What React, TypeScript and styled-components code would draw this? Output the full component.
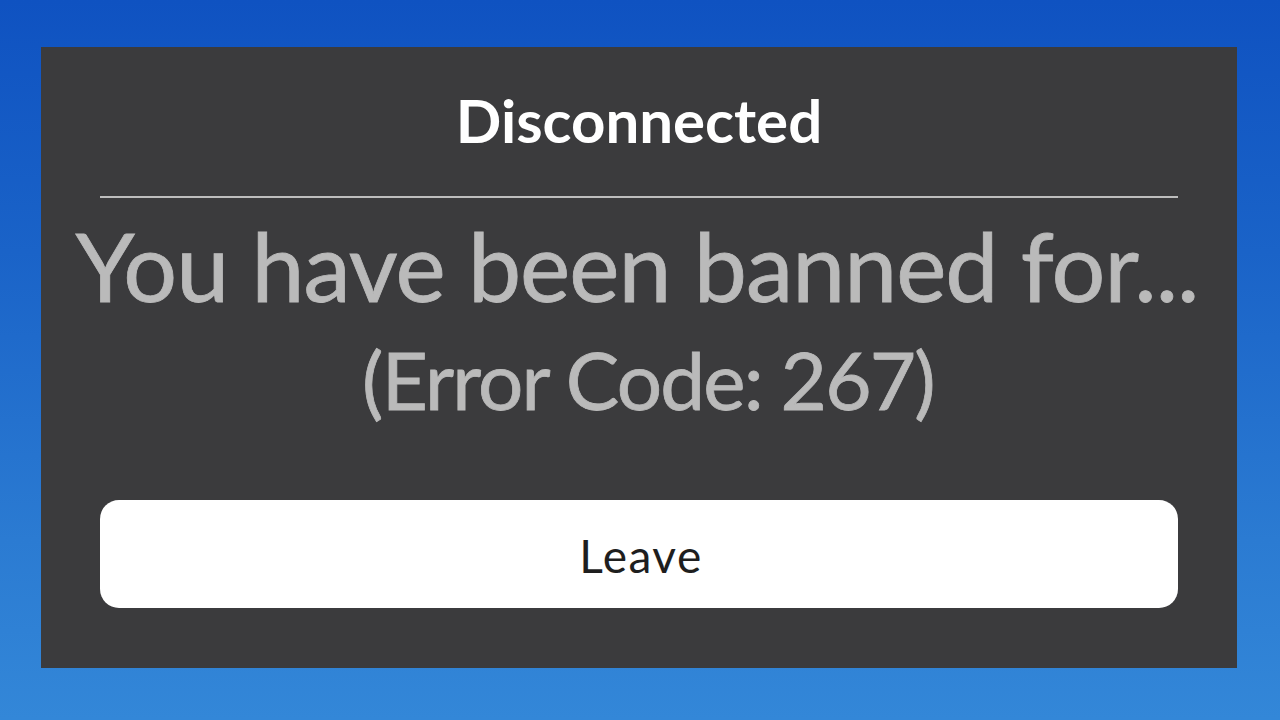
import React from "react";
import styled, { createGlobalStyle } from "styled-components";

const Global = createGlobalStyle`
  html, body { margin: 0; padding: 0; }
  body { width: 1280px; height: 720px; overflow: hidden; font-family: "Lato", "Noto Sans", sans-serif; }
`;

const Screen = styled.div`
  width: 1280px;
  height: 720px;
  box-sizing: border-box;
  padding: 47px 43px 52px 41px;
  background: linear-gradient(180deg, #0f52c1 0%, #1a63c8 35%, #2b7bd2 75%, #3387d8 100%);
  display: flex;
`;

const Panel = styled.div`
  flex: 1;
  min-width: 0;
  background: #3b3b3d;
  display: flex;
  flex-direction: column;
  padding: 0 59px 60px 59px;
`;

const Header = styled.div`
  height: 149px;
  box-sizing: border-box;
  padding-bottom: 3px;
  display: flex;
  align-items: center;
  justify-content: center;
`;

const Title = styled.h1`
  margin: 0;
  font-family: "Lato", sans-serif;
  font-weight: 700;
  font-size: 60px;
  line-height: 72px;
  color: #ffffff;
  filter: blur(0.3px);
`;

const Divider = styled.div`
  height: 2px;
  background: #bdbdbd;
`;

const Body = styled.div`
  flex: 1;
  display: flex;
  flex-direction: column;
  align-items: center;
  padding-top: 12px;
  min-width: 0;
`;

const Message = styled.div<{ $size: number; $lh: number; $ls: number; $shift?: number }>`
  font-family: "Lato", sans-serif;
  font-size: ${(p) => p.$size}px;
  line-height: ${(p) => p.$lh}px;
  letter-spacing: ${(p) => p.$ls}px;
  margin-left: ${(p) => p.$shift ?? 0}px;
  color: #bababa;
  -webkit-text-stroke: 0.8px #bababa;
  white-space: nowrap;
  filter: blur(0.7px);
`;

const LeaveButton = styled.button`
  height: 108px;
  border: none;
  border-radius: 19px;
  background: #ffffff;
  font-family: "Lato", sans-serif;
  font-size: 46px;
  letter-spacing: 1.5px;
  color: #1e1e1e;
  cursor: pointer;
  padding: 3px 0 0 4px;
`;

export default function App() {
  return (
    <>
      <Global />
      <Screen>
        <Panel>
          <Header>
            <Title>Disconnected</Title>
          </Header>
          <Divider />
          <Body>
            <Message $size={95} $lh={110} $ls={-1} $shift={-4}>You have been banned for...</Message>
            <Message $size={80} $lh={118} $ls={-1.8} $shift={18}>(Error Code: 267)</Message>
          </Body>
          <LeaveButton>Leave</LeaveButton>
        </Panel>
      </Screen>
    </>
  );
}
